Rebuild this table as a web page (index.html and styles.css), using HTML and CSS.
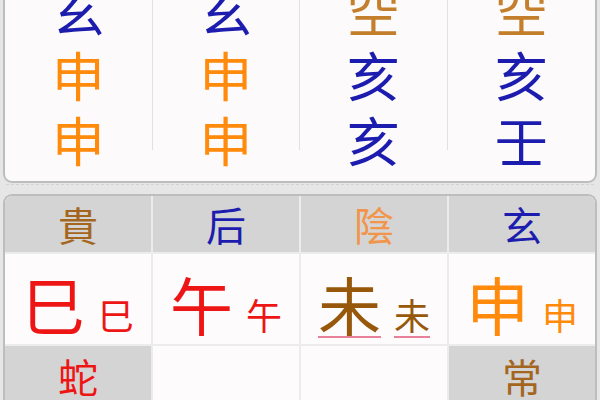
FILE: index.html
```html
<!DOCTYPE html>
<html lang="zh-Hant">
<head>
<meta charset="utf-8">
<link rel="stylesheet" href="styles.css">
</head>
<body>
<div class="top-card">
  <div class="col">
    <div class="ch blue">玄</div>
    <div class="ch orange">申</div>
    <div class="ch orange">申</div>
  </div>
  <div class="col">
    <div class="ch blue">玄</div>
    <div class="ch orange">申</div>
    <div class="ch orange">申</div>
  </div>
  <div class="col">
    <div class="ch tan">空</div>
    <div class="ch blue">亥</div>
    <div class="ch blue">亥</div>
  </div>
  <div class="col last">
    <div class="ch tan">空</div>
    <div class="ch blue">亥</div>
    <div class="ch blue">壬</div>
  </div>
</div>
<div class="divider"></div>
<div class="bottom-card">
  <div class="grid">
    <div class="cell head brown">貴</div>
    <div class="cell head blue">后</div>
    <div class="cell head light-orange">陰</div>
    <div class="cell head blue">玄</div>

    <div class="cell branch red"><span class="big">巳</span><span class="small">巳</span></div>
    <div class="cell branch red"><span class="big">午</span><span class="small">午</span></div>
    <div class="cell branch dark-brown"><span class="big marked">未</span><span class="small marked">未</span></div>
    <div class="cell branch orange"><span class="big">申</span><span class="small">申</span></div>

    <div class="cell head red">蛇</div>
    <div class="cell blank"></div>
    <div class="cell blank"></div>
    <div class="cell head brown">常</div>
  </div>
</div>
</body>
</html>
```

FILE: styles.css
```css
html, body {
  margin: 0;
  padding: 0;
}
body {
  width: 600px;
  height: 400px;
  overflow: hidden;
  background: #e6e6e6;
  font-family: "Noto Sans CJK TC", "Noto Sans CJK SC", sans-serif;
}
.blue { color: #1c1cae; }
.orange { color: #ff8a0c; }
.tan { color: #c47f2c; }
.brown { color: #a4661f; }
.light-orange { color: #f2954a; }
.red { color: #ee1515; }
.dark-brown { color: #98580c; }

.top-card {
  margin: -25px 3px 0 3px;
  border: 2px solid #bdbdbd;
  border-radius: 9px;
  background: #fcfafa;
  display: grid;
  grid-template-columns: repeat(4, 1fr);
  padding: 0 0 31px 0;
}
.col {
  height: 173px;
  border-right: 1px solid #e2e0e0;
  display: flex;
  flex-direction: column;
  align-items: center;
}
.col.last { border-right: none; }
.ch {
  font-size: 53px;
  line-height: 65px;
  height: 65px;
}

.divider {
  height: 10px;
  margin: 1px 6px 0 6px;
  border-top: 1px dashed #d2d2d2;
  box-sizing: border-box;
}

.bottom-card {
  margin: 0 3px;
  border: 2px solid #bdbdbd;
  border-bottom: none;
  border-radius: 9px 9px 0 0;
  background: #f6f6f6;
  height: 220px;
}
.grid {
  display: grid;
  grid-template-columns: repeat(4, 1fr);
  grid-template-rows: 56px 90px 60px;
  gap: 2px;
  background: #ececec;
  border-radius: 7px 7px 0 0;
  overflow: hidden;
}
.cell {
  display: flex;
  align-items: center;
  justify-content: center;
}
.head {
  background: #d4d4d4;
  font-size: 40px;
  line-height: 1;
}
.branch {
  background: #fdfbfb;
  align-items: baseline;
  padding-top: 14px;
}
.blank {
  background: #fdfbfb;
}
.big {
  font-size: 63px;
  line-height: 70px;
}
.small {
  font-size: 36px;
  line-height: 40px;
  margin-left: 13px;
}
.marked {
  text-decoration: underline;
  text-decoration-color: #e8809a;
  text-decoration-thickness: 2px;
  text-underline-offset: 6px;
}
```
